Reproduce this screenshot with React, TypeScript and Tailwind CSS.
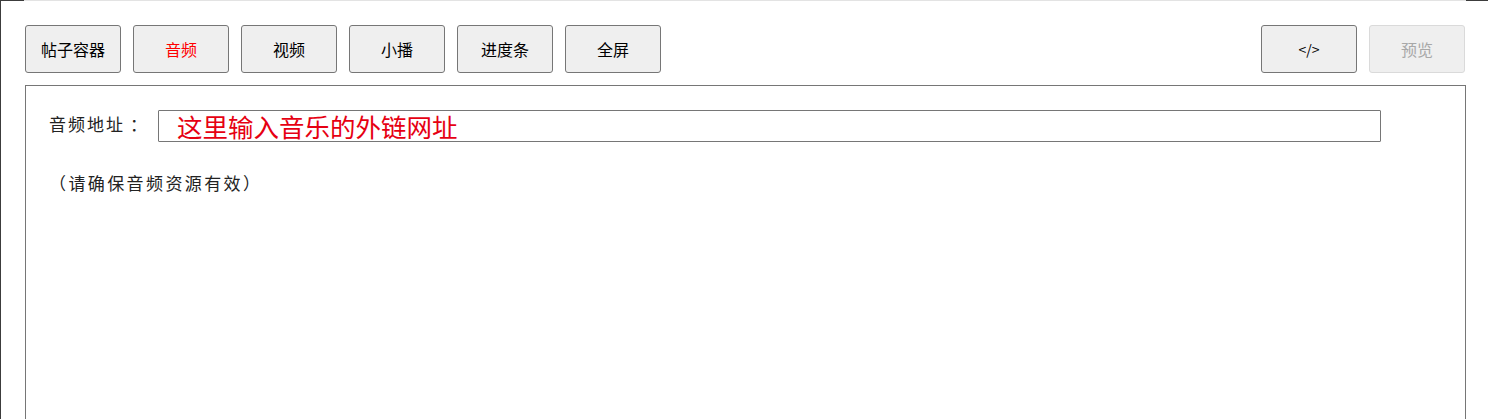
const tabs = ["帖子容器", "音频", "视频", "小播", "进度条", "全屏"];

const btn =
  "w-[96px] h-[48px] rounded-[3px] border bg-[#efefef] flex items-center justify-center";

export default function App() {
  return (
    <div
      className="w-[1488px] h-[419px] overflow-hidden bg-white border-l border-[#3c3c3c] flex flex-col"
      style={{ fontFamily: '"Noto Sans CJK SC", "Liberation Sans", sans-serif' }}
    >
      <div className="flex h-px shrink-0">
        <div className="w-[23px] bg-[#3c3c3c]" />
        <div className="flex-1 bg-[#e3e3e3]" />
        <div className="w-[22px] bg-[#3c3c3c]" />
      </div>

      <div className="flex items-center pl-[24px] pr-[23px] pt-[24px]">
        <div className="flex gap-[12px]">
          {tabs.map((t) => (
            <button
              key={t}
              type="button"
              className={`${btn} text-[16px] border-[#767676] ${t === "音频" ? "text-[#ff0000]" : "text-black"}`}
            >
              {t}
            </button>
          ))}
        </div>
        <div className="ml-auto flex gap-[12px]">
          <button type="button" className={`${btn} border-[#767676] text-black text-[14px]`}>
            {"</>"}
          </button>
          <button
            type="button"
            disabled
            className={`${btn} text-[16px] border-[#dadada] text-[#a8a8a8]`}
          >
            预览
          </button>
        </div>
      </div>

      <div className="ml-[24px] mr-[22px] mt-[12px] flex-1 border border-[#767676] border-b-0 pl-[23px] pt-[24px]">
        <div
          className="flex items-center text-[17px] tracking-[2px] text-[#222]"
          style={{ fontFamily: '"Liberation Serif", "Noto Sans CJK SC", serif' }}
        >
          <span className="w-[109px] shrink-0">
            音频地址<span className="ml-[5px]">：</span>
          </span>
          <div className="w-[1223px] h-[32px] border border-[#767676] rounded-[1px] flex items-center pl-[18px] tracking-normal">
            <span
              className="text-[25.5px] text-[#e60012] leading-none"
              style={{ fontFamily: '"Noto Sans CJK SC", sans-serif' }}
            >
              这里输入音乐的外链网址
            </span>
          </div>
        </div>
        <p
          className="mt-[30px] text-[17px] tracking-[2.4px] text-[#222]"
          style={{ fontFamily: '"Liberation Serif", "Noto Sans CJK SC", serif' }}
        >
          （请确保音频资源有效）
        </p>
      </div>
    </div>
  );
}
